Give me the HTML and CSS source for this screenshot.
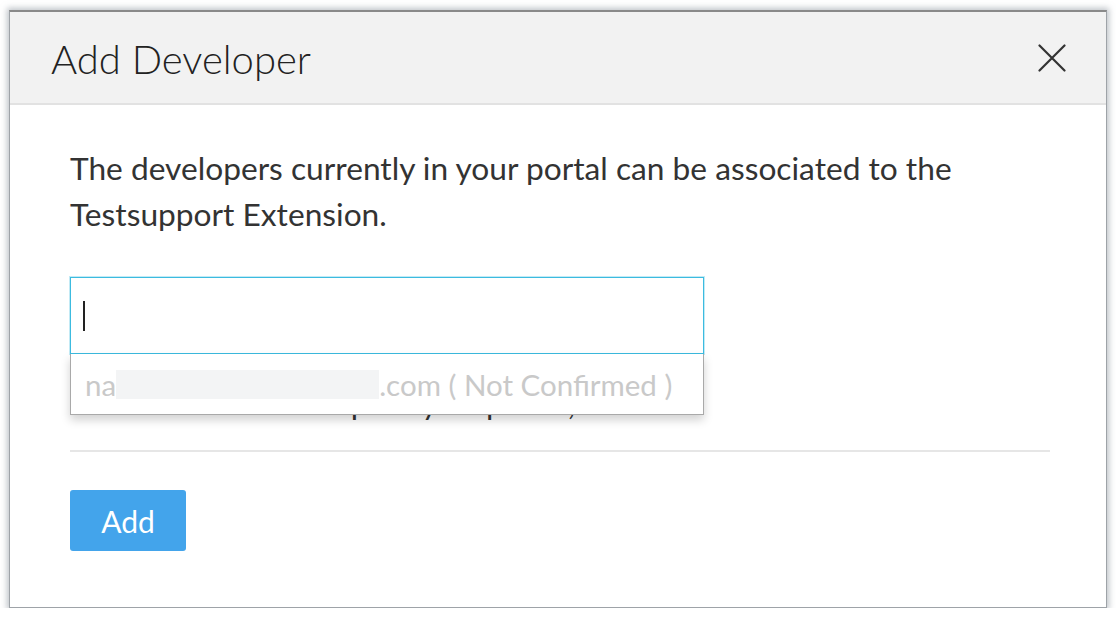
FILE: index.html
```html
<!DOCTYPE html>
<html>
<head>
<meta charset="utf-8">
<link rel="stylesheet" href="styles.css">
</head>
<body>
<div class="modal">
  <div class="modal-header">
    <h1 class="modal-title">Add Developer</h1>
    <button class="close-btn" aria-label="Close">
      <svg width="28" height="28" viewBox="0 0 28 28"><path d="M1.5 1.5 L26.5 26.5 M26.5 1.5 L1.5 26.5" stroke="#333" stroke-width="2.2" stroke-linecap="round" fill="none"/></svg>
    </button>
  </div>
  <div class="modal-body">
    <p class="intro">The developers currently in your portal can be associated to the Testsupport Extension.</p>
    <div class="field">
      <div class="input-box"><span class="caret"></span></div>
      <div class="dropdown">
        <div class="option">na<span class="masked"></span>.com ( Not Confirmed )</div>
      </div>
    </div>
    <p class="hint">Select a valid developer by its portal, or list.</p>
    <div class="divider"></div>
    <button class="add-btn">Add</button>
  </div>
</div>
</body>
</html>
```

FILE: styles.css
```css
* { box-sizing: border-box; }
html, body { margin: 0; padding: 0; background: #ffffff; }
body {
  font-family: Lato, "Open Sans", "Liberation Sans", sans-serif;
  padding: 10px 0 0 9px;
}
.modal {
  width: 1098px;
  height: 598px;
  background: #fff;
  border: 1px solid #9ea3a8;
  border-top: 2px solid #8a8a8a;
  box-shadow: 0 0 6px 2px rgba(125, 135, 145, 0.5);
  display: flex;
  flex-direction: column;
}
.modal-header {
  height: 93px;
  background: #f2f2f2;
  border-bottom: 2px solid #e2e2e2;
  display: flex;
  align-items: center;
  justify-content: space-between;
  padding: 3px 40px 0 41px;
  flex: none;
}
.modal-title {
  margin: 0;
  font-weight: 300;
  font-size: 40px;
  color: #222;
  letter-spacing: 0;
}
.close-btn {
  border: 0;
  background: transparent;
  padding: 0;
  width: 28px;
  height: 28px;
  display: flex;
  margin-top: -2px;
}
.modal-body {
  padding: 40px 56px 0 60px;
  display: flex;
  flex-direction: column;
  align-items: flex-start;
}
.intro {
  margin: 0;
  font-size: 31.7px;
  line-height: 46px;
  color: #333;
}
.field {
  position: relative;
  margin-top: 40px;
  width: 634px;
}
.input-box {
  height: 77px;
  border: 1px solid #3cbbe0;
  box-shadow: 0 0 0 1px rgba(80, 195, 225, 0.35);
  background: #fff;
  display: flex;
  align-items: center;
  padding-left: 12px;
}
.caret {
  width: 2px;
  height: 30px;
  background: #222;
}
.dropdown {
  position: absolute;
  left: 0;
  right: 0;
  top: 77px;
  height: 61px;
  background: #fff;
  border: 1px solid #a9a9a9;
  border-top: 0;
  box-shadow: 0 5px 9px rgba(0, 0, 0, 0.18);
  z-index: 2;
  display: flex;
  align-items: center;
  padding-left: 14px;
}
.option {
  font-size: 29.5px;
  color: #c9c9c9;
  display: flex;
  align-items: center;
  white-space: nowrap;
}
.masked {
  display: inline-block;
  width: 263px;
  height: 29px;
  background: #f3f4f5;
}
.hint {
  margin: 26px 0 0 0;
  font-size: 31.7px;
  line-height: 46px;
  color: #333;
  white-space: nowrap;
}
.divider {
  align-self: stretch;
  height: 2px;
  background: #e6e6e6;
  margin-top: 24px;
}
.add-btn {
  margin-top: 38px;
  width: 116px;
  height: 61px;
  border: 0;
  border-radius: 3px;
  background: #43a4eb;
  color: #fff;
  font-family: Lato, "Open Sans", "Liberation Sans", sans-serif;
  font-size: 30px;
  padding: 0;
}
```
